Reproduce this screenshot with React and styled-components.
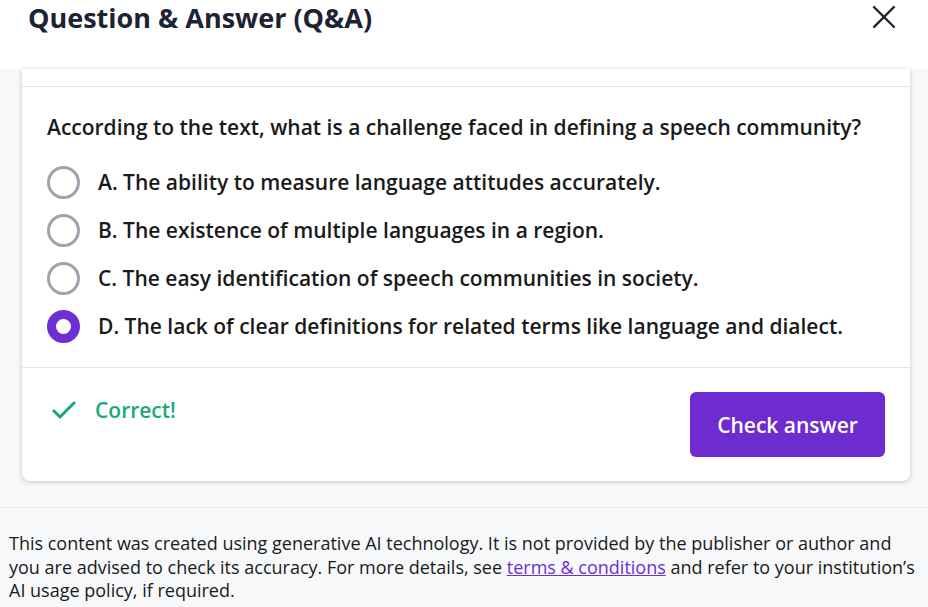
import React from 'react'
import styled, { createGlobalStyle } from 'styled-components'

const GlobalStyle = createGlobalStyle`
    html, body {
        margin: 0;
        padding: 0;
        background: #f7f8fa;
        font-family: "Open Sans", "Liberation Sans", sans-serif;
        color: #1a1a1a;
    }
    * { box-sizing: border-box; }
`

const options = [
    'A. The ability to measure language attitudes accurately.',
    'B. The existence of multiple languages in a region.',
    'C. The easy identification of speech communities in society.',
    'D. The lack of clear definitions for related terms like language and dialect.',
]

function App() {
    const [selected, setSelected] = React.useState(3)

    return (
        <Page>
            <GlobalStyle />
            <Header>
                <Title>Question &amp; Answer (Q&amp;A)</Title>
                <CloseButton aria-label="Close">
                    <svg width="26" height="26" viewBox="0 0 24 24" fill="none" stroke="#1f2633" strokeWidth="2.2" strokeLinecap="square">
                        <path d="M3 3 L21 21 M21 3 L3 21" />
                    </svg>
                </CloseButton>
            </Header>
            <Content>
                <Card>
                    <CardTop />
                    <QuestionBody>
                        <Question>According to the text, what is a challenge faced in defining a speech community?</Question>
                        <OptionList>
                            {options.map((opt, i) => (
                                <Option key={i} onClick={() => setSelected(i)}>
                                    <Radio $checked={i === selected} />
                                    <span>{opt}</span>
                                </Option>
                            ))}
                        </OptionList>
                    </QuestionBody>
                    <CardFooter>
                        <Feedback>
                            <svg width="26" height="20" viewBox="0 0 26 20" fill="none" stroke="#1aa87a" strokeWidth="3">
                                <path d="M2 10 L9 17 L24 2" />
                            </svg>
                            Correct!
                        </Feedback>
                        <CheckButton>Check answer</CheckButton>
                    </CardFooter>
                </Card>
            </Content>
            <Disclaimer>
                This content was created using generative AI technology. It is not provided by the publisher or author and<br />
                you are advised to check its accuracy. For more details, see <a href="#">terms &amp; conditions</a> and refer to your institution’s<br />
                AI usage policy, if required.
            </Disclaimer>
        </Page>
    )
}

const Page = styled.div`
    width: 928px;
    min-height: 607px;
    background: #f7f8fa;
    overflow: hidden;
`

const Header = styled.header`
    height: 69px;
    background: #fff;
    display: flex;
    align-items: flex-start;
    justify-content: space-between;
    padding: 0 31px 0 28px;
`

const Title = styled.h1`
    margin: 0;
    font-size: 27px;
    font-weight: 700;
    line-height: 36px;
    color: #1c2333;
`

const CloseButton = styled.button`
    border: none;
    background: none;
    padding: 0;
    margin-top: 4px;
    cursor: pointer;
    display: flex;
`

const Content = styled.div`
    padding: 0 18px 26px 22px;
    border-bottom: 1px solid #e4e6ea;
`

const Card = styled.div`
    background: #fff;
    border-radius: 0 0 8px 8px;
    box-shadow: 0 1px 5px rgba(0, 0, 0, 0.22);
`

const CardTop = styled.div`
    height: 18px;
    border-bottom: 1px solid #e3e5e8;
`

const QuestionBody = styled.div`
    padding: 26px 25px 24px 25px;
    border-bottom: 1px solid #e3e5e8;
`

const Question = styled.p`
    margin: 0 0 24px 0;
    font-size: 21px;
    font-weight: 600;
    line-height: 28px;
    color: #1a1a1a;
`

const OptionList = styled.div`
    display: flex;
    flex-direction: column;
    gap: 14px;
`

const Option = styled.label`
    display: flex;
    align-items: center;
    gap: 18px;
    font-size: 21px;
    font-weight: 600;
    line-height: 34px;
    cursor: pointer;
`

const Radio = styled.span`
    width: 33px;
    height: 33px;
    border-radius: 50%;
    flex-shrink: 0;
    background: #fff;
    border: ${p => (p.$checked ? '9px solid #6d2fd3' : '3px solid #9ea4ad')};
`

const CardFooter = styled.div`
    display: flex;
    justify-content: space-between;
    align-items: flex-start;
    padding: 24px 25px 24px 29px;
`

const Feedback = styled.div`
    display: flex;
    align-items: center;
    gap: 18px;
    margin-top: 4px;
    font-size: 21px;
    font-weight: 600;
    color: #1aa87a;
`

const CheckButton = styled.button`
    width: 195px;
    height: 65px;
    border: none;
    border-radius: 6px;
    background: #6d2bd0;
    color: #fff;
    font-family: inherit;
    font-size: 21px;
    font-weight: 600;
    cursor: pointer;
`

const Disclaimer = styled.p`
    margin: 0;
    padding: 24px 4px 0 9px;
    font-size: 18px;
    line-height: 23.5px;
    color: #1a1a1a;
    white-space: nowrap;

    a {
        color: #6d2fd3;
        text-decoration: underline;
    }
`

export default App
